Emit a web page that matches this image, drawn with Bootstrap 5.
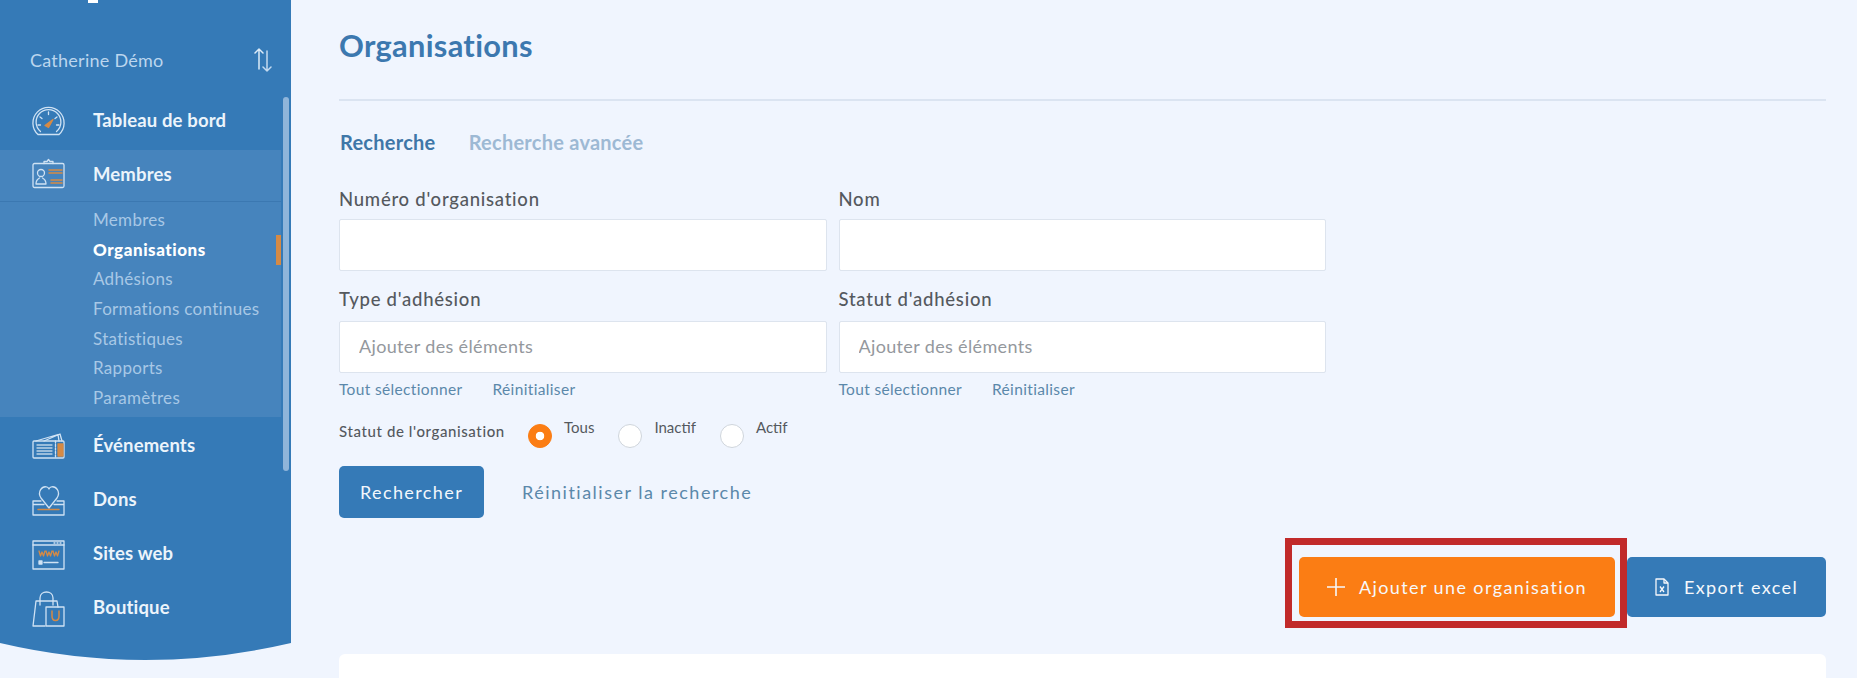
<!DOCTYPE html>
<html lang="fr">
<head>
    <meta charset="UTF-8">
    <meta name="viewport" content="width=device-width, initial-scale=1.0">
    <title>Organisations</title>
    <link href="https://cdn.jsdelivr.net/npm/bootstrap@5.3.3/dist/css/bootstrap.min.css" rel="stylesheet">
    <style>
      html, body { height: 100%; overflow: hidden; }
      body {
        background: #f0f5fe;
        font-family: "Lato", "Liberation Sans", sans-serif;
        color: #55595e;
      }
      .page-wrap { height: 678px; }

      /* sidebar */
      .side-col { width: 291px; flex: 0 0 291px; position: relative; align-self: flex-start; }
      .side-body { background: #357ab7; height: 643px; padding-top: 94px; position: relative; }
      .side-curve { display: block; width: 291px; height: 17px; }
      .side-logo { position: absolute; left: 88px; top: 0; width: 10px; height: 3px; background: #fff; }
      .side-user { position: absolute; left: 30px; top: 47px; width: 242px; color: #bcd6ee; font-size: 18px; line-height: 26px; letter-spacing: .25px; }
      .side-track { position: absolute; left: 283px; top: 97px; width: 6px; height: 374px; border-radius: 3px; background: #8fb5da; }
      .side-row { height: 54px; padding-left: 32px; width: 281px; color: #ecf4fb; font-size: 18.5px; font-weight: 700; letter-spacing: .15px; text-decoration: none; }
      .side-row svg { width: 33px; height: 33px; margin-right: 28px; flex: none; }
      .side-row.is-open { background: #4684bd; height: 52px; margin-top: 2px; padding-bottom: 2px; border-bottom: 1px solid #3b78b1; }
      .side-sub { background: #4684bd; width: 281px; height: 215px; padding: 3px 0 0 93px; margin-bottom: 2px; }
      .side-sub a { display: block; position: relative; height: 29.7px; line-height: 29.7px; margin-left: -93px; padding-left: 93px; color: #a8c8e6; font-size: 17px; letter-spacing: .3px; text-decoration: none; }
      .side-sub a.is-current { color: #fff; font-weight: 900; letter-spacing: .55px; }
      .side-sub a.is-current::after { content: ""; position: absolute; right: 0; top: 0; width: 5px; height: 30px; background: #d58a45; }

      /* main */
      .main-col { min-width: 0; padding: 0 31px 0 48px; }
      .page-title { color: #3c78af; font-size: 30.8px; font-weight: 700; line-height: 36px; margin: 28px 0 0; letter-spacing: .3px; }
      .title-rule { height: 2px; background: #dbe4f1; margin-top: 35px; }
      .tab-line { margin-top: 28px; height: 26px; font-size: 20px; line-height: 26px; font-weight: 700; letter-spacing: .25px; }
      .tab-line a { text-decoration: none; }
      .tab-on { color: #3f77a8; margin: 0 28px 0 1px; }
      .tab-off { color: #9db9d4; }
      .filter-form { width: 987px; margin-top: 32px; }
      .filter-form .row { --bs-gutter-x: 12px; }
      .filter-form .form-label { color: #55595e; font-size: 18.5px; font-weight: 500; line-height: 24px; margin: 0 0 8px; letter-spacing: .75px; }
      .filter-form .field-gap .form-label { margin-bottom: 10px; }
      .filter-form .form-control { height: 52px; border: 1px solid #dde4ee; border-radius: 2px; font-size: 18px; color: #55595e; padding: 0 19px 2px; letter-spacing: .35px; }
      .filter-form .form-control::placeholder { color: #94989d; }
      .field-gap { margin-top: 16px; }
      .mini-links { font-size: 15.5px; line-height: 20px; margin-top: 6px; letter-spacing: .35px; }
      .mini-links a { color: #5b88aa; text-decoration: none; margin-right: 30px; }
      .status-row { margin-top: 18px; height: 30px; }
      .status-title { font-size: 15px; font-weight: 500; color: #55595e; width: 189px; letter-spacing: .6px; line-height: 28px; }
      .status-row .form-check { padding: 0; margin: 0 24px 0 0; min-height: 0; }
      .status-row .form-check-input { width: 24px; height: 24px; margin: 7px 12px 0 0; float: none; background-color: #fff; border: 1px solid #cfd5dc; }
      .status-row .form-check-input:checked {
        background-color: #fb7d14; border-color: #fb7d14;
        background-image: radial-gradient(circle, #fff 4px, transparent 4.6px);
      }
      .status-row .form-check-label { font-size: 15px; line-height: 20px; color: #55595e; }
      .btn-find { background: #357ab7; color: #f2f7fc; width: 145px; height: 52px; border: 0; border-radius: 5px; font-size: 18px; letter-spacing: 1.4px; padding: 0; }
      .btn-clear { color: #5b88aa; font-size: 18px; letter-spacing: 1.5px; text-decoration: none; margin-left: 38px; }
      .search-actions { margin-top: 19px; }
      .list-actions { margin-top: 20px; height: 90px; }
      .add-frame { border: 7px solid #c12a2a; padding: 12px 5px 4px 7px; height: 90px; background: #f0f5fe; }
      .btn-add, .btn-export { height: 60px; border: 0; border-radius: 5px; color: #f6f8fb; font-size: 18px; letter-spacing: 1.4px; padding: 0; }
      .btn-add { background: #fb7d14; width: 316px; }
      .btn-export { background: #357ab7; width: 199px; margin-top: 19px; }
      .btn-add svg { margin-right: 14px; }
      .btn-export svg { margin-right: 15px; }
      .result-card { height: 25px; margin-top: 26px; background: #fff; border: 0; border-radius: 6px 6px 0 0; }
    </style>
</head>
<body>
<div class="page-wrap d-flex">
  <aside class="side-col">
    <div class="side-body">
      <span class="side-logo"></span>
      <div class="side-user d-flex justify-content-between align-items-center">
        <span>Catherine Démo</span>
        <svg width="18" height="24" viewBox="0 0 18 24" fill="none" stroke="#dcebf8" stroke-width="1.5" stroke-linecap="round" stroke-linejoin="round">
          <path d="M5 21V1M1 5l4-4 4 4"/>
          <path d="M13 3v20M9 19l4 4 4-4" stroke="#c3daf0"/>
        </svg>
      </div>

      <a class="side-row d-flex align-items-center" href="#">
        <svg viewBox="0 0 33 33" fill="none" stroke="#cfe2f4" stroke-width="1.3" stroke-linecap="round" stroke-linejoin="round">
          <path d="M6 29.5A15.6 15.6 0 1 1 27 29.5Z"/>
          <path d="M8.5 26.5A12.4 12.4 0 1 1 24.5 26.5"/>
          <path d="M16.5 7v2.5M8 12l2 1.6M25 12l-2 1.6M6 20h2.5M27 20h-2.5"/>
          <path d="M13 20.5l8-6-4.5 8z" fill="#d58a45" stroke="#d58a45"/>
        </svg>
        Tableau de bord
      </a>
      <a class="side-row is-open d-flex align-items-center" href="#">
        <svg viewBox="0 0 33 33" fill="none" stroke="#cfe2f4" stroke-width="1.3" stroke-linecap="round" stroke-linejoin="round">
          <rect x="1" y="5.5" width="31" height="24" rx="1.5"/>
          <path d="M12 5.5V3.5h3L16.500 1.500l1.500 2h3v2"/>
          <circle cx="9" cy="15" r="3.500"/>
          <path d="M4 26c0-4 1.500-5 3.500-6M14 26c0-4-1.500-5-3.500-6M4 26h10"/>
          <path d="M17 12h13M17 15h13M19 22h11M19 25h11" stroke="#d58a45" stroke-width="1.600"/>
        </svg>
        Membres
      </a>
      <nav class="side-sub">
        <a href="#">Membres</a>
        <a class="is-current" href="#">Organisations</a>
        <a href="#">Adhésions</a>
        <a href="#">Formations continues</a>
        <a href="#">Statistiques</a>
        <a href="#">Rapports</a>
        <a href="#">Paramètres</a>
      </nav>
      <a class="side-row d-flex align-items-center" href="#">
        <svg viewBox="0 0 33 33" fill="none" stroke="#cfe2f4" stroke-width="1.3" stroke-linecap="round" stroke-linejoin="round">
          <rect x="1" y="11" width="31" height="17" rx="1"/>
          <path d="M4 11l22-6.500 1 6.500M12 11l16-7 2 7"/>
          <path d="M5 15h15M5 18h15M5 21h15M5 24h15" stroke="#bcd3e8"/>
          <path d="M23.500 11v17" stroke-dasharray="2 1.500"/>
          <rect x="26" y="14" width="5" height="12" fill="#d58a45" stroke="#d58a45"/>
        </svg>
        Événements
      </a>
      <a class="side-row d-flex align-items-center" href="#">
        <svg viewBox="0 0 33 33" fill="none" stroke="#cfe2f4" stroke-width="1.3" stroke-linecap="round" stroke-linejoin="round">
          <path d="M17 24L9 14C5 8 10 1.500 15 3c1 .3 1.500 1 2 2 .5-1 1-1.700 2-2 5-1.500 10 5 6 11z"/>
          <path d="M9 17H1v14h31V17h-7M12 20.500H1M22 20.500h10"/>
          <path d="M6 25.500h21" stroke="#d58a45" stroke-width="1.500"/>
        </svg>
        Dons
      </a>
      <a class="side-row d-flex align-items-center" href="#">
        <svg viewBox="0 0 33 33" fill="none" stroke="#cfe2f4" stroke-width="1.3" stroke-linecap="round" stroke-linejoin="round">
          <rect x="1" y="3" width="31" height="28"/>
          <path d="M1 7h31M22 5h1M25 5h1M28 5h1"/>
          <path d="M7 13l1.500 5 1.500-4 1.500 4 1.500-5M14 13l1.500 5 1.500-4 1.500 4 1.500-5M21 13l1.500 5 1.500-4 1.500 4 1.500-5" stroke="#d58a45"/>
          <rect x="7" y="23" width="3" height="3" fill="#cfe2f4"/>
          <path d="M12 24.500h14"/>
        </svg>
        Sites web
      </a>
      <a class="side-row d-flex align-items-center" href="#">
        <svg viewBox="0 0 33 37" fill="none" stroke="#cfe2f4" stroke-width="1.3" stroke-linecap="round" stroke-linejoin="round" style="height:37px">
          <path d="M13 36H1L4 11h21l1 6"/>
          <path d="M8 15V8c0-8 13-8 13 0v7"/>
          <path d="M14 17h18v19H14z"/>
          <path d="M20 21v5c0 6 7 6 7 0v-5" stroke="#d58a45" stroke-width="1.500"/>
        </svg>
        Boutique
      </a>
      <span class="side-track"></span>
    </div>
    <svg class="side-curve" viewBox="0 0 291 17" preserveAspectRatio="none"><path d="M0 0H291Q145 34 0 0Z" fill="#357ab7"/></svg>
  </aside>

  <main class="main-col flex-grow-1">
    <h1 class="page-title">Organisations</h1>
    <div class="title-rule"></div>
    <div class="tab-line">
      <a class="tab-on" href="#">Recherche</a>
      <a class="tab-off" href="#">Recherche avancée</a>
    </div>

    <form class="filter-form">
      <div class="row">
        <div class="col-6">
          <label class="form-label" for="f-num">Numéro d'organisation</label>
          <input class="form-control" id="f-num" type="text">
        </div>
        <div class="col-6">
          <label class="form-label" for="f-nom">Nom</label>
          <input class="form-control" id="f-nom" type="text">
        </div>
      </div>
      <div class="row field-gap">
        <div class="col-6">
          <label class="form-label" for="f-type">Type d'adhésion</label>
          <input class="form-control" id="f-type" type="text" placeholder="Ajouter des éléments">
          <div class="mini-links"><a href="#">Tout sélectionner</a><a href="#">Réinitialiser</a></div>
        </div>
        <div class="col-6">
          <label class="form-label" for="f-statut">Statut d'adhésion</label>
          <input class="form-control" id="f-statut" type="text" placeholder="Ajouter des éléments">
          <div class="mini-links"><a href="#">Tout sélectionner</a><a href="#">Réinitialiser</a></div>
        </div>
      </div>
      <div class="status-row d-flex align-items-start">
        <span class="status-title">Statut de l'organisation</span>
        <div class="form-check d-flex align-items-start">
          <input class="form-check-input" type="radio" name="statut" id="r-tous" checked>
          <label class="form-check-label" for="r-tous">Tous</label>
        </div>
        <div class="form-check d-flex align-items-start">
          <input class="form-check-input" type="radio" name="statut" id="r-inactif">
          <label class="form-check-label" for="r-inactif">Inactif</label>
        </div>
        <div class="form-check d-flex align-items-start">
          <input class="form-check-input" type="radio" name="statut" id="r-actif">
          <label class="form-check-label" for="r-actif">Actif</label>
        </div>
      </div>
      <div class="search-actions d-flex align-items-center">
        <button class="btn btn-find" type="button">Rechercher</button>
        <a class="btn-clear" href="#">Réinitialiser la recherche</a>
      </div>
    </form>

    <div class="list-actions d-flex justify-content-end align-items-start">
      <div class="add-frame">
        <button class="btn btn-add d-flex align-items-center justify-content-center" type="button">
          <svg width="18" height="18" viewBox="0 0 18 18" stroke="#f6f8fb" stroke-width="1.600"><path d="M9 0v18M0 9h18"/></svg>
          Ajouter une organisation
        </button>
      </div>
      <button class="btn btn-export d-flex align-items-center justify-content-center" type="button">
        <svg width="14" height="18" viewBox="0 0 14 18" fill="none" stroke="#f6f8fb" stroke-width="1.300" stroke-linejoin="round"><path d="M1 1h8l4 4v12H1z"/><path d="M9 1v4h4"/><path d="M5 8.500l4 5.500M9 8.500l-4 5.500"/></svg>
        Export excel
      </button>
    </div>

    <div class="card result-card"></div>
  </main>
</div>
<script src="https://cdn.jsdelivr.net/npm/bootstrap@5.3.3/dist/js/bootstrap.bundle.min.js"></script>
</body>
</html>
